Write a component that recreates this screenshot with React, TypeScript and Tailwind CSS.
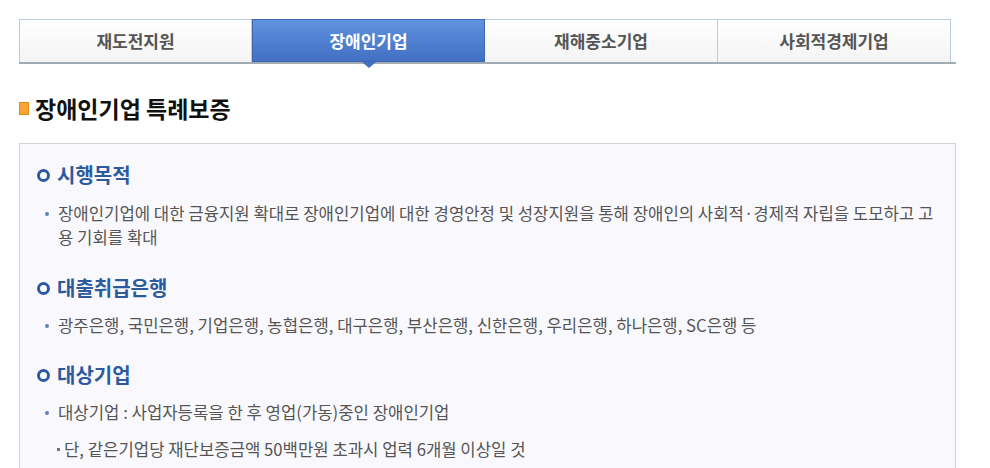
import React from "react";

const tabs = ["재도전지원", "장애인기업", "재해중소기업", "사회적경제기업"];

const SectionTitle = ({ children }: { children: React.ReactNode }) => (
  <h3 className="flex items-center gap-[7px] text-[20px] font-bold text-[#2d5a9e] leading-[28px]">
    <span className="inline-block w-[13px] h-[13px] rounded-full border-[3px] border-[#2d5a9e] bg-white" />
    {children}
  </h3>
);

const Bullet = ({ children }: { children: React.ReactNode }) => (
  <li className="relative pl-[21px] text-[16.7px] leading-[24px] text-[#555]">
    <span className="absolute left-[8px] top-[11px] w-[4px] h-[4px] rounded-full bg-[#5b84c4]" />
    {children}
  </li>
);

const App = () => {
  return (
    <div
      className="w-[990px] h-[468px] overflow-hidden bg-white pl-[19px] pt-[19px]"
      style={{ fontFamily: '"Noto Sans CJK KR", "Noto Sans", sans-serif' }}
    >
      <div className="w-[937px]">
        {/* tabs */}
        <div className="flex border-b-2 border-[#a3abb3]">
          {tabs.map((t, i) => {
            const active = i === 1;
            return (
              <div
                key={t}
                className={
                  active
                    ? "relative w-[233px] h-[43px] flex items-center justify-center text-[17px] font-bold text-white bg-gradient-to-b from-[#6092e0] to-[#4270c2] border border-[#3d66b3]"
                    : "relative w-[233px] h-[43px] flex items-center justify-center text-[17px] font-bold text-[#555] bg-gradient-to-b from-white to-[#f4f4f4] border-t border-r border-[#bccbd9] first:border-l"
                }
              >
                {t}
                {active && (
                  <span className="absolute left-1/2 -translate-x-1/2 top-full mt-[1px] w-0 h-0 border-l-[7px] border-r-[7px] border-t-[6px] border-l-transparent border-r-transparent border-t-[#4270c2]" />
                )}
              </div>
            );
          })}
        </div>

        {/* heading */}
        <h2 className="mt-[29px] flex items-center gap-[6px] text-[23px] font-bold text-[#111] leading-[30px]">
          <span className="inline-block w-[10px] h-[13px] bg-[#f7a432] border border-[#e28c17]" />
          장애인기업 특례보증
        </h2>

        {/* content box */}
        <div className="mt-[20px] border border-[#cfd3da] bg-[#f9f9fd] pl-[17px] pr-[14px] pt-[17px] pb-[20px] h-[400px]">
          <SectionTitle>시행목적</SectionTitle>
          <ul className="mt-[12px]">
            <Bullet>
              장애인기업에 대한 금융지원 확대로 장애인기업에 대한 경영안정 및 성장지원을 통해 장애인의 사회적·경제적 자립을 도모하고 고용 기회를 확대
            </Bullet>
          </ul>

          <div className="mt-[25px]">
            <SectionTitle>대출취급은행</SectionTitle>
          </div>
          <ul className="mt-[11px]">
            <Bullet>
              광주은행, 국민은행, 기업은행, 농협은행, 대구은행, 부산은행, 신한은행, 우리은행, 하나은행, SC은행 등
            </Bullet>
          </ul>

          <div className="mt-[24px]">
            <SectionTitle>대상기업</SectionTitle>
          </div>
          <ul className="mt-[11px]">
            <Bullet>대상기업 : 사업자등록을 한 후 영업(가동)중인 장애인기업</Bullet>
          </ul>
          <p className="relative mt-[13px] pl-[27px] text-[16.7px] leading-[24px] text-[#555]">
            <span className="absolute left-[20px] top-[11px] w-[3px] h-[3px] bg-[#777]" />
            단, 같은기업당 재단보증금액 50백만원 초과시 업력 6개월 이상일 것
          </p>
        </div>
      </div>
    </div>
  );
};

export default App;
